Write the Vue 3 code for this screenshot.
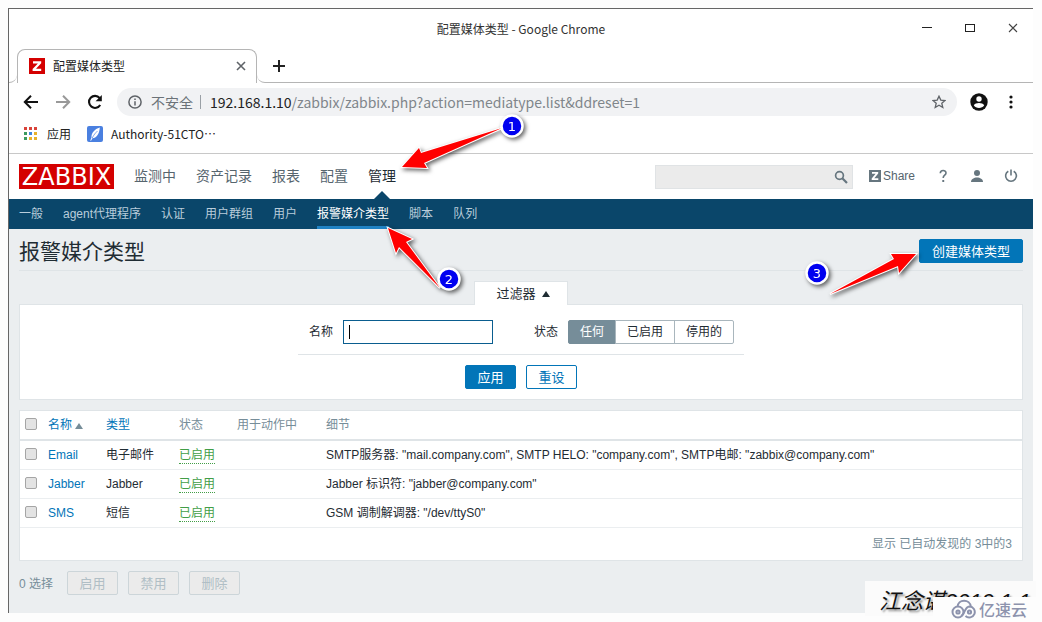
<script setup>
import { ref } from 'vue'

const mainMenu = ['监测中', '资产记录', '报表', '配置', '管理']
const subMenu = ['一般', 'agent代理程序', '认证', '用户群组', '用户', '报警媒介类型', '脚本', '队列']
const states = ['任何', '已启用', '停用的']
const state = ref('任何')
const name = ref('')
const rows = [
  { name: 'Email', type: '电子邮件', details: 'SMTP服务器: "mail.company.com", SMTP HELO: "company.com", SMTP电邮: "zabbix@company.com"' },
  { name: 'Jabber', type: 'Jabber', details: 'Jabber 标识符: "jabber@company.com"' },
  { name: 'SMS', type: '短信', details: 'GSM 调制解调器: "/dev/ttyS0"' },
]
const appDots = ['#d9433a', '#d9433a', '#d9433a', '#3c9a5f', '#3f86e0', '#e8b22a', '#3c9a5f', '#e8b22a', '#e8b22a']
</script>

<template>
  <div class="window">
    <header class="titlebar">
      <span class="wtitle">配置媒体类型 - Google Chrome</span>
      <div class="wbtns">
        <button aria-label="最小化"><svg width="12" height="12"><path d="M1 5.5h10" stroke="#222" /></svg></button>
        <button aria-label="最大化"><svg width="12" height="12"><rect x="1.5" y="2.5" width="9" height="7" fill="none" stroke="#222" /></svg></button>
        <button aria-label="关闭"><svg width="12" height="12"><path d="M2 2l8 8M10 2l-8 8" stroke="#444" stroke-width="1.1" /></svg></button>
      </div>
    </header>

    <div class="tabs">
      <div class="lead"></div>
      <div class="tab">
        <svg width="16" height="16"><rect width="16" height="16" fill="#d40000" /><path d="M4 3.2h8.2v2L7 10.7h5.2v2.2H3.6v-2L8.9 5.4H4z" fill="#fff" /></svg>
        <span>配置媒体类型</span>
        <button aria-label="关闭标签页"><svg width="10" height="10"><path d="M1 1l8 8M9 1l-8 8" stroke="#5f6368" stroke-width="1.6" /></svg></button>
      </div>
      <div class="rest">
        <button aria-label="新标签页"><svg width="12" height="12"><path d="M6 0v12M0 6h12" stroke="#222" stroke-width="2" /></svg></button>
      </div>
    </div>

    <div class="toolbar">
      <button class="nav" aria-label="后退"><svg width="16" height="16"><path d="M15 8H2M8 1.8L1.8 8 8 14.2" fill="none" stroke="#111" stroke-width="2" /></svg></button>
      <button class="nav" aria-label="前进"><svg width="16" height="16"><path d="M1 8h13M8 1.8L14.2 8 8 14.2" fill="none" stroke="#999" stroke-width="2" /></svg></button>
      <button class="nav" aria-label="重新加载"><svg width="16" height="16"><path d="M13.2 11A6 6 0 1 1 12.6 4" fill="none" stroke="#111" stroke-width="2.1" /><path d="M14.8 1v6.2H8.6z" fill="#111" /></svg></button>
      <div class="omnibox">
        <svg width="14" height="14"><circle cx="7" cy="7" r="6.1" fill="none" stroke="#5f6368" stroke-width="1.5" /><path d="M7 6.2v4.2M7 3.4v1.6" stroke="#5f6368" stroke-width="1.5" /></svg>
        <span class="insecure">不安全</span>
        <span class="url"><b>192.168.1.10</b>/zabbix/zabbix.php?action=mediatype.list&amp;ddreset=1</span>
        <button class="star" aria-label="收藏"><svg width="14" height="14"><path d="M7 1.2l1.8 3.9 4.2.4-3.2 2.8 1 4.2L7 10.3l-3.8 2.2 1-4.2L1 5.5l4.2-.4z" fill="none" stroke="#5f6368" stroke-width="1.3" /></svg></button>
      </div>
      <button class="avatar" aria-label="用户"><svg width="18" height="18"><circle cx="9" cy="9" r="8.7" fill="#111" /><circle cx="9" cy="6" r="2.7" fill="#fff" /><path d="M3.8 12.2c1.6-3 8.8-3 10.4 0-2 3.6-8.4 3.6-10.4 0z" fill="#fff" /></svg></button>
      <button class="more" aria-label="菜单"><svg width="4" height="14"><g fill="#111"><circle cx="2" cy="2" r="1.6" /><circle cx="2" cy="7" r="1.6" /><circle cx="2" cy="12" r="1.6" /></g></svg></button>
    </div>

    <div class="bookmarks">
      <a href="#">
        <svg width="14" height="14"><rect v-for="(c, i) in appDots" :key="i" :x="(i % 3) * 5" :y="Math.floor(i / 3) * 5" width="3" height="3" :fill="c" /></svg>
        应用
      </a>
      <a href="#">
        <svg width="16" height="16"><rect width="16" height="16" rx="2" fill="#4a80e0" /><path d="M12.8 1.5C7.5 3 4.3 7 4.5 11.5L3.2 14.8l1-.2 1.2-2.3c4-.3 7-4.3 7.4-10.8z" fill="#fff" /><path d="M5.2 12C7 8.5 8.5 7 10.5 5" stroke="#4a80e0" stroke-width=".7" fill="none" /></svg>
        <span>Authority-51CTO<span lang="zh">⋯</span></span>
      </a>
    </div>

    <div class="zabbix">
      <div class="top">
        <a class="logo" href="#">ZABBIX</a>
        <nav class="main">
          <a v-for="m in mainMenu" :key="m" href="#" :class="{ on: m === '管理' }">{{ m }}</a>
        </nav>
        <div class="search">
          <input type="text" aria-label="搜索" />
          <button aria-label="搜索"><svg width="14" height="14"><circle cx="5.5" cy="5.5" r="3.9" fill="none" stroke="#66767f" stroke-width="1.7" /><path d="M8.3 8.3L13 13" stroke="#66767f" stroke-width="2.2" /></svg></button>
        </div>
        <a class="share" href="#"><svg width="12" height="12"><rect width="12" height="12" fill="#66767f" /><path d="M3 2h6.2v1.6L5.3 8.3h4V10H2.7V8.4l3.9-4.7H3z" fill="#fff" /></svg>Share</a>
        <a class="ic" href="#" aria-label="帮助"><svg width="14" height="14"><path d="M4.3 4.2C4.3.7 10 .7 10 4c0 2.3-2.8 2.2-2.8 5" fill="none" stroke="#66767f" stroke-width="1.6" /><rect x="6.3" y="11" width="1.9" height="2" fill="#66767f" /></svg></a>
        <a class="ic" href="#" aria-label="用户资料"><svg width="14" height="14"><circle cx="7" cy="4" r="3" fill="#66767f" /><path d="M1 13c0-6 12-6 12 0z" fill="#66767f" /></svg></a>
        <a class="ic" href="#" aria-label="退出"><svg width="14" height="14"><path d="M4.3 2.2a5.4 5.4 0 1 0 5.4 0M7 .5v6" fill="none" stroke="#66767f" stroke-width="1.6" /></svg></a>
      </div>
      <nav class="sub">
        <a v-for="s in subMenu" :key="s" href="#" :class="{ on: s === '报警媒介类型' }">{{ s }}</a>
      </nav>

      <main>
        <div class="heading">
          <h1>报警媒介类型</h1>
          <button class="btn create">创建媒体类型</button>
        </div>

        <div class="ftabrow"><button class="ftab">过滤器 <i class="up"></i></button></div>
        <form class="filter" @submit.prevent>
          <div class="fields">
            <label for="fname">名称</label>
            <div class="namebox"><input id="fname" v-model="name" type="text" /><i class="caret"></i></div>
            <span id="statelabel">状态</span>
            <div class="seg" role="radiogroup" aria-labelledby="statelabel">
              <label v-for="s in states" :key="s" :class="{ on: s === state }"><input v-model="state" type="radio" name="state" :value="s" />{{ s }}</label>
            </div>
          </div>
          <div class="actions">
            <button class="btn">应用</button>
            <button class="btn alt" type="reset">重设</button>
          </div>
        </form>

        <div class="list">
          <table>
            <thead>
              <tr>
                <th class="c1"><input type="checkbox" aria-label="全选" /></th>
                <th class="c2"><a href="#">名称<i class="up grey"></i></a></th>
                <th class="c3"><a href="#">类型</a></th>
                <th class="c4">状态</th>
                <th class="c5">用于动作中</th>
                <th>细节</th>
              </tr>
            </thead>
            <tbody>
              <tr v-for="r in rows" :key="r.name">
                <td class="c1"><input type="checkbox" :aria-label="r.name" /></td>
                <td><a href="#">{{ r.name }}</a></td>
                <td>{{ r.type }}</td>
                <td><a class="enabled" href="#">已启用</a></td>
                <td></td>
                <td>{{ r.details }}</td>
              </tr>
            </tbody>
          </table>
          <div class="total">显示 已自动发现的 3中的3</div>
        </div>

        <div class="bulk">
          <span>0 选择</span>
          <button class="btn off" disabled>启用</button>
          <button class="btn off" disabled>禁用</button>
          <button class="btn off" disabled>删除</button>
        </div>
      </main>
    </div>

    <svg class="note n1" width="140" height="70">
      <path d="M12 57L29 38L31 43L112 18L34 53L37 58Z" />
      <circle cx="122" cy="16" r="10.5" /><text x="122" y="21">1</text>
    </svg>
    <svg class="note n2" width="90" height="80">
      <path d="M8 8L32 19L26 22L60 68L19 27L16 33Z" />
      <circle cx="69" cy="59" r="10.5" /><text x="69" y="64">2</text>
    </svg>
    <svg class="note n3" width="130" height="60">
      <path d="M116 14L91 14L94 19L30 54L98 26L99 33Z" />
      <circle cx="17" cy="33" r="10.5" /><text x="17" y="38">3</text>
    </svg>

    <div class="signature">江念谌2019.1.1</div>
    <div class="brand">
      <svg width="26" height="20" fill="none" stroke="#8d93ad" stroke-width="2"><path d="M6.5 8C7-.5 19-.5 20 8" /><circle cx="7" cy="13" r="5.5" /><path d="M10 17C14 16 13 8 18.5 7.5a5.5 5.5 0 1 1-4 9.5" /><circle cx="7" cy="13" r="1.6" /><circle cx="18.5" cy="13" r="1.6" /></svg>
      亿速云
    </div>
  </div>
</template>

<style>
body { background: #fdfdfd; }
</style>

<style scoped>
* { box-sizing: border-box; }
svg { display: block; flex: none; }
button { border: 0; padding: 0; background: none; font: inherit; color: inherit; cursor: pointer; white-space: nowrap; }
a { color: #0275b8; text-decoration: none; }
.window {
  position: relative;
  margin: 8px 9px 9px 8px;
  border: 1px solid #666;
  border-width: 1px 0 0 1px;
  background: #fff;
  font: 13px/20px "Noto Sans CJK SC", sans-serif;
  color: #222;
}
.titlebar { display: flex; align-items: center; height: 40px; position: relative; }
.wtitle { flex: 1; text-align: center; font-size: 12px; color: #333; }
.wbtns { position: absolute; right: 14px; top: 13px; display: flex; gap: 31px; }
.tabs { display: flex; height: 34px; }
.lead { width: 8px; border-bottom: 1px solid #b5b5b5; border-bottom-right-radius: 8px; }
.tab {
  display: flex; align-items: center; width: 240px; padding: 0 10px 2px 11px; gap: 8px;
  border: 1px solid #b5b5b5; border-bottom: 0; border-radius: 8px 8px 0 0; font-size: 12px;
}
.tab span { flex: 1; }
.rest { flex: 1; display: flex; align-items: center; padding-left: 16px; border-bottom: 1px solid #b5b5b5; border-bottom-left-radius: 8px; }
.toolbar { display: flex; align-items: center; height: 37px; padding: 0 20px 0 14px; }
.nav { margin-right: 16px; }
.omnibox {
  flex: 1; display: flex; align-items: center; height: 28px; margin-left: -2px; padding: 0 11px;
  border-radius: 14px; background: #f1f2f4; font-size: 14px; color: #6b7278;
}
.insecure { margin-left: 9px; padding-right: 7px; border-right: 1px solid #9aa0a6; line-height: 14px; }
.url { flex: 1; margin-left: 9px; color: #80868b; }
.url b { font-weight: 400; color: #222; }
.avatar { margin: 0 21px 0 13px; }
.bookmarks { display: flex; gap: 16px; height: 34px; padding: 4px 15px 0; border-bottom: 1px solid #c8c8c8; }
.bookmarks a { display: flex; align-items: center; gap: 8px; height: 20px; font-size: 12px; color: #222; }
.bookmarks a:first-child { gap: 9px; }

.zabbix { background: #ebeef0; font: 12px/18px "Liberation Sans", "Noto Sans CJK SC", sans-serif; color: #1f2c33; }
.top { display: flex; align-items: center; height: 45px; padding: 0 15px 0 10px; background: #fff; }
.logo { width: 95px; height: 25px; background: #d40000; color: #fff; font: 24px/26px "DejaVu Sans", sans-serif; text-align: center; }
.main { display: flex; flex: 1; align-self: stretch; margin-left: 20px; gap: 20px; font-size: 14px; line-height: 44px; white-space: nowrap; }
.main a { position: relative; color: #56656e; }
.main a.on { color: #1f2c33; }
.main a.on::after { content: ""; position: absolute; left: 50%; bottom: 0; margin-left: -8px; border: 8px solid transparent; border-top: 0; border-bottom-color: #0a466a; }
.search { display: flex; align-items: center; width: 198px; height: 24px; padding-right: 4px; background: #ebebeb; border: 1px solid #e0e3e5; }
.search input { flex: 1; min-width: 0; border: 0; background: none; outline: 0; }
.share { display: flex; align-items: center; gap: 2px; margin: 0 21px 0 16px; padding-bottom: 1px; color: #56656e; }
.ic { margin-left: 20px; padding-bottom: 1px; }
.share + .ic { margin-left: 0; }
.sub { display: flex; gap: 20px; height: 30px; padding: 0 10px; background: #0a466a; white-space: nowrap; }
.sub a { line-height: 30px; color: #b9cddb; border-bottom: 3px solid transparent; height: 30px; }
.sub a.on { color: #fff; border-color: #1f82c4; }
main { padding: 0 10px 18px; }
.heading { display: flex; justify-content: space-between; align-items: flex-start; height: 42px; padding-top: 10px; border-bottom: 1px solid #dfe4e7; }
h1 { margin: 0; font-size: 21px; font-weight: 400; line-height: 26px; }
.btn { min-width: 51px; height: 24px; padding: 1px 11px 0; border: 1px solid #0275b8; border-radius: 2px; background: #0275b8; color: #fff; font-size: 13px; line-height: 21px; }
.btn.create { padding: 1px 12px 0; }
.btn.alt { background: #fff; color: #0275b8; }
.ftabrow { display: flex; justify-content: center; padding-top: 10px; }
.ftab { display: flex; align-items: center; gap: 6px; height: 24px; padding: 1px 17px 0 21px; margin-bottom: -1px; border: 1px solid #dfe4e7; border-bottom: 0; background: #fff; font-size: 13px; z-index: 1; }
.up { display: inline-block; border: 4px solid transparent; border-top: 0; border-bottom: 6px solid #1f2c33; }
.up.grey { margin-left: 3px; border-bottom-color: #768d99; }
.filter { padding: 15px 0 10px; border: 1px solid #dfe4e7; background: #fff; }
.fields { display: flex; align-items: center; width: 446px; height: 35px; margin: 0 auto; padding: 0 0 10px 11px; border-bottom: 1px solid #dfe4e7; white-space: nowrap; }
.namebox { position: relative; margin: 0 41px 0 10px; }
.namebox input { display: block; width: 150px; height: 24px; padding: 0 5px; border: 1px solid #0a5d8f; outline: 0; font: inherit; }
.caret { position: absolute; left: 6px; top: 5px; width: 1px; height: 14px; background: #000; }
.seg { display: flex; margin-left: 10px; }
.seg label { position: relative; height: 24px; padding: 0 11px; margin-left: -1px; border: 1px solid #a9b6bd; line-height: 22px; }
.seg label:first-child { margin-left: 0; border-radius: 2px 0 0 2px; }
.seg label:last-child { border-radius: 0 2px 2px 0; }
.seg label.on { background: #768d99; border-color: #768d99; color: #fff; }
.seg input { position: absolute; opacity: 0; margin: 0; }
.actions { display: flex; justify-content: center; gap: 10px; padding-top: 10px; }
.list { margin-top: 10px; border: 1px solid #dfe4e7; background: #fff; }
table { width: 100%; border-collapse: collapse; table-layout: fixed; }
th, td { padding: 0; height: 29px; text-align: left; font-weight: 400; border-bottom: 1px solid #ebeef0; white-space: nowrap; }
th { color: #768d99; border-bottom: 2px solid #dfe4e7; }
.c1 { width: 28px; padding: 0 0 2px 5px; }
.c2 { width: 58px; }
.c3 { width: 73px; }
.c4 { width: 58px; }
.c5 { width: 89px; }
input[type="checkbox"] { appearance: none; display: block; width: 12px; height: 12px; margin: 0; border: 1px solid #a5a5a5; border-radius: 2px; background: #e3e3e3; }
a.enabled { display: inline-block; line-height: 16px; color: #429e47; border-bottom: 1px dotted #429e47; }
.total { height: 32px; padding-right: 10px; line-height: 32px; text-align: right; color: #768d99; }
.bulk { display: flex; align-items: center; gap: 10px; margin-top: 10px; color: #768d99; }
.bulk span { margin-right: 4px; padding-top: 2px; }
.btn.off { background: #ebebeb; border-color: #ccd5d9; color: #b0bec5; }

.note { position: absolute; overflow: visible; filter: drop-shadow(2px 2px 2px rgba(0, 0, 0, 0.6)); pointer-events: none; }
.note path { fill: #f00; stroke: #fff; stroke-width: 2; paint-order: stroke; }
.note circle { fill: #0000f0; stroke: #fff; stroke-width: 2.5; }
.note text { fill: #fff; font: 13px "DejaVu Sans", sans-serif; text-anchor: middle; }
.n1 { left: 381px; top: 101px; }
.n2 { left: 371px; top: 211px; }
.n3 { right: 103px; top: 231px; }
.signature {
  position: absolute; right: -3px; bottom: -3px; width: 171px; height: 35px; padding-left: 14px; overflow: hidden;
  background: #fbfbfb; font: italic 22px/42px "Liberation Sans", "Noto Sans CJK SC", sans-serif; color: #111; white-space: nowrap;
  text-shadow: 2px 2px 2px #999;
}
.brand {
  position: absolute; right: -9px; bottom: -9px; display: flex; align-items: center; gap: 2px; width: 109px; height: 25px; padding-left: 18px;
  background: #fdfdfd; color: #8d93ad; font-size: 16px; font-weight: 500; white-space: nowrap;
}
</style>
